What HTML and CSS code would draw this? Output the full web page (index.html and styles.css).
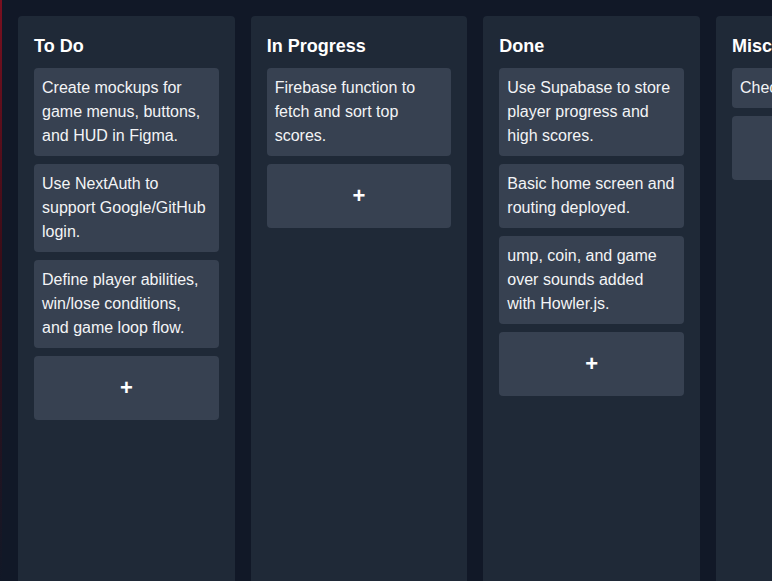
FILE: index.html
```html
<!DOCTYPE html>
<html lang="en">
<head>
<meta charset="utf-8">
<title>Board</title>
<link rel="stylesheet" href="styles.css">
</head>
<body>
<div class="edge"></div>
<main class="board">
  <section class="column">
    <h2 class="column-title">To Do</h2>
    <div class="card">Create mockups for game menus, buttons, and HUD in Figma.</div>
    <div class="card">Use NextAuth to support Google/GitHub login.</div>
    <div class="card">Define player abilities, win/lose conditions, and game loop flow.</div>
    <button class="add">+</button>
  </section>
  <section class="column">
    <h2 class="column-title">In Progress</h2>
    <div class="card">Firebase function to fetch and sort top scores.</div>
    <button class="add">+</button>
  </section>
  <section class="column">
    <h2 class="column-title">Done</h2>
    <div class="card">Use Supabase to store player progress and high scores.</div>
    <div class="card">Basic home screen and routing deployed.</div>
    <div class="card">ump, coin, and game over sounds added with Howler.js.</div>
    <button class="add">+</button>
  </section>
  <section class="column">
    <h2 class="column-title">Miscellaneous</h2>
    <div class="card">Check audio levels.</div>
    <button class="add">+</button>
  </section>
</main>
</body>
</html>
```

FILE: styles.css
```css
html, body {
  margin: 0;
  padding: 0;
  height: 100%;
  overflow: hidden;
  background: #111827;
  font-family: "Liberation Sans", Arial, sans-serif;
  color: #f9fafb;
}

.edge {
  position: fixed;
  left: 0;
  top: 0;
  bottom: 0;
  width: 2px;
  background: linear-gradient(to bottom, #7a1020 0%, #3a0d18 45%, #111827 100%);
}

.board {
  display: flex;
  gap: 16px;
  padding: 16px 0 0 18px;
  height: 100%;
  box-sizing: border-box;
}

.column {
  flex: 0 0 216.67px;
  width: 216.67px;
  background: #1f2937;
  border-radius: 4px 4px 0 0;
  padding: 16px;
  box-sizing: border-box;
  height: calc(100% + 20px);
  display: flex;
  flex-direction: column;
  gap: 8px;
}

.column-title {
  margin: 0;
  font-size: 18px;
  line-height: 28px;
  font-weight: 700;
  color: #ffffff;
  white-space: nowrap;
}

.card {
  background: #374151;
  border-radius: 4px;
  padding: 8px;
  font-size: 16px;
  line-height: 24px;
  color: #f3f4f6;
}

.add {
  display: block;
  width: 100%;
  height: 64px;
  border: none;
  border-radius: 4px;
  background: #374151;
  color: #ffffff;
  font-family: "Liberation Sans", Arial, sans-serif;
  font-size: 22px;
  font-weight: 700;
  line-height: 1;
  padding: 0;
  cursor: pointer;
}
```
